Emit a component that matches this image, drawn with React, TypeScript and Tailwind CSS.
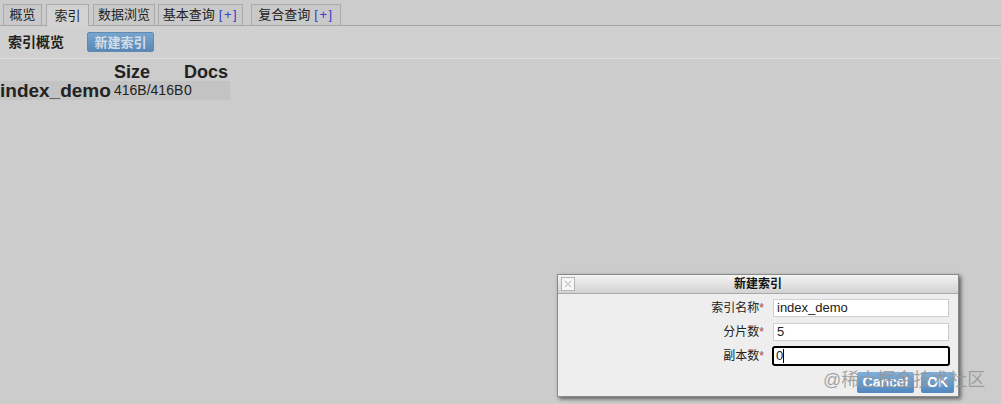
const tabs = [
  { label: '概览', w: 'w-[39px]', ml: 'ml-[3px]' },
  { label: '索引', w: 'w-[43px]', ml: 'ml-[4px]', active: true },
  { label: '数据浏览', w: 'w-[62px]', ml: 'ml-[4px]' },
  { label: '基本查询', w: 'w-[85px]', ml: 'ml-[3px]', plus: true },
  { label: '复合查询', w: 'w-[90px]', ml: 'ml-[8px]', plus: true },
];

const fields = [
  { label: '索引名称', value: 'index_demo' },
  { label: '分片数', value: '5' },
  { label: '副本数', value: '0', focused: true },
];

export default function App() {
  return (
    <div className="relative w-[1001px] h-[404px] overflow-hidden bg-[#cccccc] text-[#222] font-['Liberation_Sans','Noto_Sans_CJK_SC',sans-serif]">
      {/* tabs */}
      <div className="flex items-end h-[26px] border-b border-[#a6a6a6]">
        {tabs.map((t) => (
          <div
            key={t.label}
            className={`${t.w} ${t.ml} flex items-center justify-center border border-b-0 border-[#aaaaaa] text-[13px] ${
              t.active ? 'h-[22px] -mb-px bg-[#d2d2d2]' : 'h-[21px] bg-[#c9c9c9]'
            }`}
          >
            {t.label}
            {t.plus && <span className="ml-[4px] tracking-[1.5px] text-[#3a3ad0]">[+]</span>}
          </div>
        ))}
      </div>

      {/* toolbar */}
      <div className="flex items-center h-[33px] bg-[#d0d0d0] border-b border-[#dedede]">
        <span className="ml-[8px] w-[79px] text-[14px] font-bold">索引概览</span>
        <button className="w-[67px] h-[20px] rounded-[2px] border border-[#5f8ab3] bg-gradient-to-b from-[#78a5ce] to-[#5a88b6] text-[13px] font-bold text-[#d3dde8]">
          新建索引
        </button>
      </div>

      {/* indices table */}
      <div className="grid grid-cols-[114px_70px_46px] w-[230px] mt-[1px]">
        <div className="h-[21px]" />
        <div className="h-[21px] pt-[2px] text-[18px] font-bold leading-[21px]">Size</div>
        <div className="h-[21px] pt-[2px] text-[18px] font-bold leading-[21px]">Docs</div>
        <div className="h-[19px] bg-[#c3c3c3] text-[19px] font-bold leading-[20px] whitespace-nowrap">index_demo</div>
        <div className="h-[19px] bg-[#c3c3c3] text-[14px] leading-[19px]">416B/416B</div>
        <div className="h-[19px] bg-[#c3c3c3] text-[14px] leading-[19px]">0</div>
      </div>

      {/* dialog */}
      <div className="absolute left-[557px] top-[274px] w-[402px] h-[123px] flex flex-col border border-[#8a8a8a] bg-[#eeeeee] shadow-[2px_2px_4px_rgba(0,0,0,0.55)]">
        <div className="relative flex items-center justify-center h-[19px] border-b border-[#a9a9a9] bg-gradient-to-b from-[#f4f4f4] to-[#d2d2d2]">
          <div className="absolute left-[3px] top-[2px] w-[14px] h-[14px] border border-[#b5b5b5] bg-[#f7f7f7] flex items-center justify-center">
            <svg width="10" height="10" viewBox="0 0 10 10">
              <path d="M2 2 L8 8 M8 2 L2 8" stroke="#cfcfcf" strokeWidth="1.5" />
            </svg>
          </div>
          <span className="text-[12px] font-bold text-[#111]">新建索引</span>
        </div>
        <div className="flex flex-col gap-[6px] pt-[5px]">
          {fields.map((f) => (
            <div key={f.label} className="flex items-center h-[18px]">
              <span className="w-[206px] text-right text-[12px] text-[#222]">
                {f.label}
                <span className="text-[#b03a3a]">*</span>
              </span>
              {f.focused ? (
                <div className="ml-[8px] w-[178px] h-[20px] flex items-center px-[2px] border-2 border-black rounded-[3px] bg-white text-[13px]">
                  {f.value}
                  <span className="w-px h-[14px] bg-black" />
                </div>
              ) : (
                <div className="ml-[9px] w-[176px] h-[18px] flex items-center px-[3px] border border-[#d0d0d0] bg-white text-[13px]">
                  {f.value}
                </div>
              )}
            </div>
          ))}
        </div>
        <div className="flex justify-end gap-[7px] mt-[7px] pr-[4px]">
          <button className="w-[57px] h-[21px] rounded-[2px] bg-gradient-to-b from-[#7fb0dd] to-[#4f87bf] text-[14px] font-bold text-white">
            Cancel
          </button>
          <button className="w-[33px] h-[21px] rounded-[2px] bg-gradient-to-b from-[#7fb0dd] to-[#4f87bf] text-[14px] font-bold text-white">
            OK
          </button>
        </div>
      </div>

      {/* watermark */}
      <div className="absolute left-[823px] top-[369px] text-[18px] leading-[22px] text-[rgba(150,150,150,0.85)] whitespace-nowrap">
        @稀土掘金技术社区
      </div>
    </div>
  );
}
